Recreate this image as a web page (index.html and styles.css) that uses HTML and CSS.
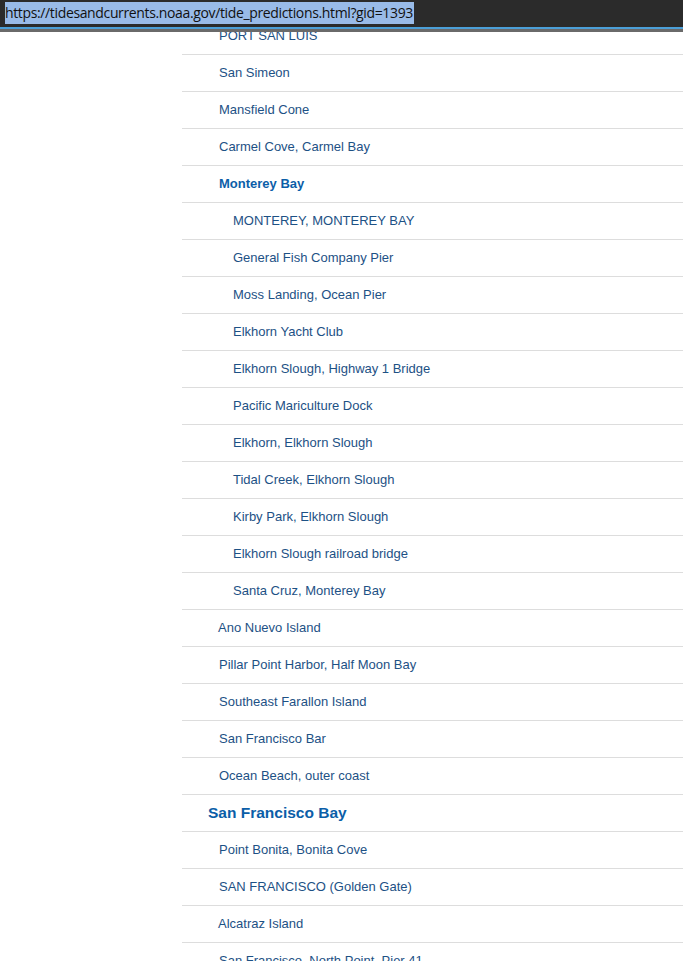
FILE: index.html
```html
<!DOCTYPE html>
<html>
<head>
<meta charset="utf-8">
<link rel="stylesheet" href="styles.css">
</head>
<body>
<div class="topbar">
  <div class="urlrow"><span class="url">https://tidesandcurrents.noaa.gov/tide_predictions.html?gid=1393</span></div>
  <div class="blue"></div>
  <div class="gray"></div>
</div>
<div class="viewport">
  <ul class="list">
    <li class="l1 caps">PORT SAN LUIS</li>
    <li class="l1">San Simeon</li>
    <li class="l1">Mansfield Cone</li>
    <li class="l1">Carmel Cove, Carmel Bay</li>
    <li class="l1 sub">Monterey Bay</li>
    <li class="l2">MONTEREY, MONTEREY BAY</li>
    <li class="l2">General Fish Company Pier</li>
    <li class="l2">Moss Landing, Ocean Pier</li>
    <li class="l2">Elkhorn Yacht Club</li>
    <li class="l2">Elkhorn Slough, Highway 1 Bridge</li>
    <li class="l2">Pacific Mariculture Dock</li>
    <li class="l2">Elkhorn, Elkhorn Slough</li>
    <li class="l2">Tidal Creek, Elkhorn Slough</li>
    <li class="l2">Kirby Park, Elkhorn Slough</li>
    <li class="l2">Elkhorn Slough railroad bridge</li>
    <li class="l2">Santa Cruz, Monterey Bay</li>
    <li class="l1b">Ano Nuevo Island</li>
    <li class="l1">Pillar Point Harbor, Half Moon Bay</li>
    <li class="l1">Southeast Farallon Island</li>
    <li class="l1">San Francisco Bar</li>
    <li class="l1">Ocean Beach, outer coast</li>
    <li class="group">San Francisco Bay</li>
    <li class="l1">Point Bonita, Bonita Cove</li>
    <li class="l1">SAN FRANCISCO (Golden Gate)</li>
    <li class="l1b">Alcatraz Island</li>
    <li class="l1">San Francisco, North Point, Pier 41</li>
  </ul>
</div>
</body>
</html>
```
FILE: styles.css
```css
html, body {
  margin: 0;
  padding: 0;
  background: #ffffff;
  overflow: hidden;
}
.topbar {
  height: 32px;
  background: #2b2b2b;
  display: flex;
  flex-direction: column;
}
.urlrow {
  height: 27px;
  padding: 2px 0 0 5px;
  box-sizing: border-box;
}
.url {
  display: inline-block;
  height: 22px;
  line-height: 22px;
  background: #99bbe8;
  color: #111;
  font-family: "Open Sans", "DejaVu Sans", sans-serif;
  font-size: 14px;
  letter-spacing: -0.36px;
  padding-right: 1px;
}
.blue {
  height: 2px;
  background: #4b9fd8;
}
.gray {
  height: 3px;
  background: #6a6a6a;
}
.viewport {
  height: 929px;
  overflow: hidden;
}
.list {
  list-style: none;
  margin: -15px 0 0 182px;
  padding: 0;
  font-family: "Liberation Sans", Arial, sans-serif;
  font-size: 13px;
  color: #1d5185;
}
.list li {
  height: 36px;
  line-height: 36px;
  border-top: 1px solid #dddddd;
  white-space: nowrap;
}
.l1 { padding-left: 37px; }
.l1b { padding-left: 36px; }
.l2 { padding-left: 51px; }
.sub {
  padding-left: 37px;
  font-weight: bold;
  color: #0b5ea8;
}
.group {
  padding-left: 26px;
  font-weight: bold;
  font-size: 15.5px;
  color: #0b5ea8;
}
```
